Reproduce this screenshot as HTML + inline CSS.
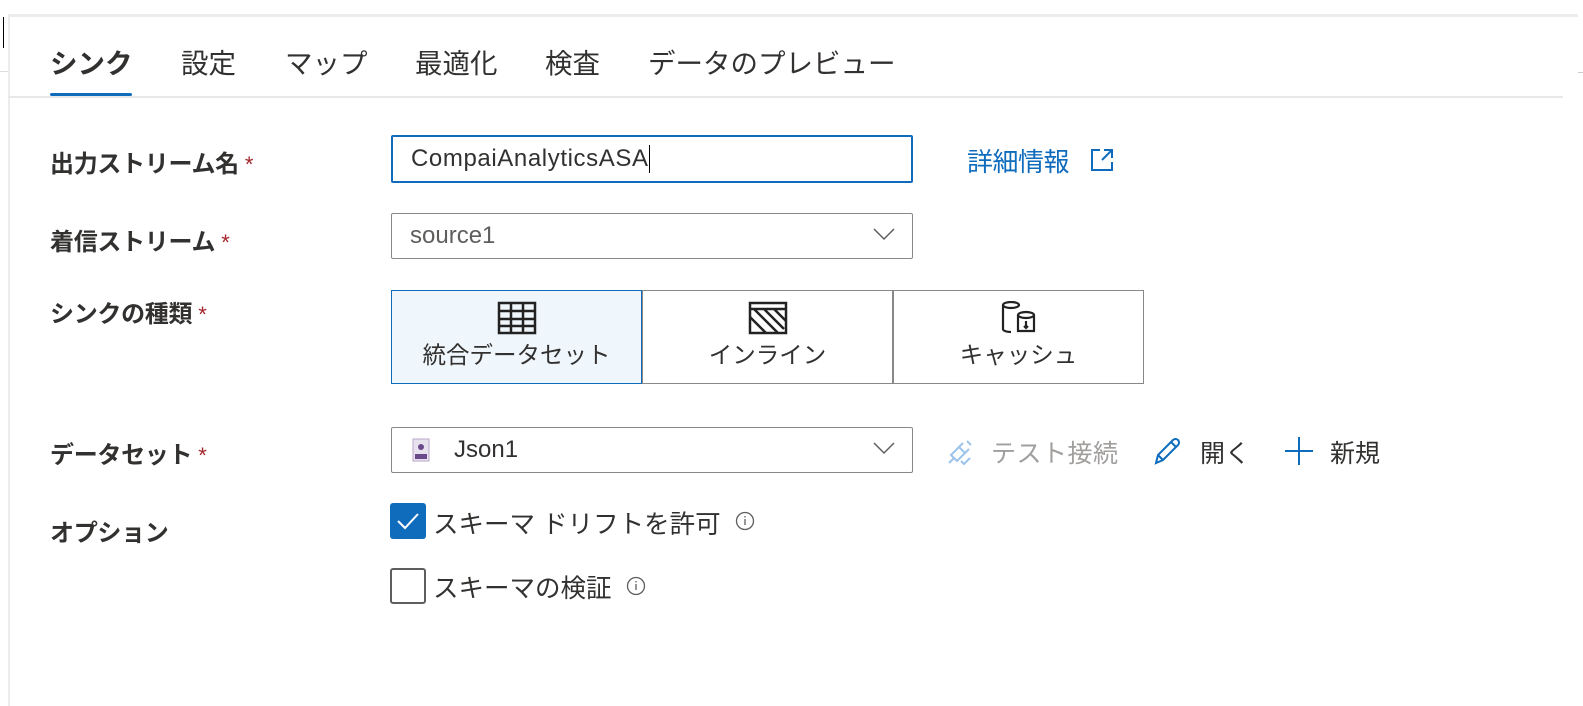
<!DOCTYPE html><html><head><meta charset="utf-8"><style>
body{margin:0;width:1583px;height:706px;background:#fff;position:relative;overflow:hidden;font-family:"Liberation Sans","Noto Sans CJK JP",sans-serif;color:#323130}
.a{position:absolute}
.tab{position:absolute;top:41px;font-size:27.5px;color:#323130;white-space:nowrap}
.lbl{position:absolute;left:50px;font-size:24px;font-weight:bold;color:#323130;white-space:nowrap;letter-spacing:-0.3px}
.lbl span{color:#a4262c;font-weight:normal;margin-left:6px;font-size:22px}
.box{position:absolute;border:1px solid #8a8886;border-radius:2px;box-sizing:border-box;font-size:24px;display:flex;align-items:center}
.tile{position:absolute;top:290px;height:94px;border:1.5px solid #8a8886;box-sizing:border-box;text-align:center;font-size:23.5px}
.tile svg{display:block;margin:10px auto 1px}
</style></head><body>
<div class="a" style="left:3px;top:17px;width:1px;height:31px;background:#000"></div>
<div class="a" style="left:8px;top:14px;width:1570px;height:3px;background:#ececec"></div>
<div class="a" style="left:8px;top:14px;width:2px;height:692px;background:#ececec"></div>
<div class="a" style="left:0;top:71px;width:8px;height:1px;background:#ddd"></div>
<div class="a" style="left:1578px;top:72px;width:5px;height:1px;background:#ccc"></div>
<div class="tab" style="left:50px;font-weight:bold">シンク</div>
<div class="tab" style="left:181px">設定</div>
<div class="tab" style="left:285px">マップ</div>
<div class="tab" style="left:415px">最適化</div>
<div class="tab" style="left:545px">検査</div>
<div class="tab" style="left:648px">データのプレビュー</div>
<div class="a" style="left:50px;top:93px;width:82px;height:3px;background:#0f6cbd;border-radius:2px"></div>
<div class="a" style="left:8px;top:96px;width:1555px;height:2px;background:#e8e8e8"></div>

<div class="lbl" style="top:144px">出力ストリーム名<span>*</span></div>
<div class="box" style="left:391px;top:135px;width:522px;height:48px;border:2px solid #0f6cbd;padding-left:18px;color:#323130;letter-spacing:0.6px">CompaiAnalyticsASA<span style="display:inline-block;width:1px;height:28px;background:#000"></span></div>
<div class="a" style="left:967px;top:142px;font-size:26px;color:#0f6cbd;letter-spacing:-0.5px">詳細情報</div>
<svg class="a" style="left:1090px;top:148px" width="24" height="24" viewBox="0 0 24 24" fill="none" stroke="#0f6cbd" stroke-width="2"><path d="M10 2H2v20h20v-8M14 2h8v8M22 2L12 12"/></svg>

<div class="lbl" style="top:222px">着信ストリーム<span>*</span></div>
<div class="box" style="left:391px;top:213px;width:522px;height:46px;padding-left:18px;color:#605e5c">source1</div>
<svg class="a" style="left:873px;top:227px" width="22" height="14" viewBox="0 0 22 14" fill="none" stroke="#605e5c" stroke-width="1.5"><path d="M1 2l10 10 10-10"/></svg>

<div class="lbl" style="top:294px">シンクの種類<span>*</span></div>
<div class="tile" style="left:391px;width:251px;background:#eff6fc;border-color:#0f6cbd">
<svg width="40" height="34" viewBox="0 0 40 34" fill="none" stroke="#222" stroke-width="2.5"><rect x="2" y="2" width="36" height="30"/><path d="M2 10h36M2 18h36M2 25h36M14 2v30M26 2v30"/></svg>統合データセット</div>
<div class="tile" style="left:642px;width:251px">
<svg width="40" height="34" viewBox="0 0 40 34" fill="none" stroke="#222" stroke-width="2.5"><rect x="2" y="2" width="36" height="30"/><path d="M2 8h36M6 8l24 24M16 8l20 20M26 8l12 12M2 16l16 16"/></svg>インライン</div>
<div class="tile" style="left:893px;width:251px">
<svg width="40" height="34" viewBox="0 0 40 34" fill="none" stroke="#222" stroke-width="2.2"><path d="M20 4a8 3 0 1 0-16 0v24c0 2 4 3 8 3M4 4a8 3 0 0 0 16 0"/><ellipse cx="27" cy="14" rx="8" ry="3"/><path d="M19 14v16h16V14M27 20v7M25 25l2 2 2-2"/></svg>キャッシュ</div>

<div class="lbl" style="top:435px">データセット<span>*</span></div>
<div class="box" style="left:391px;top:427px;width:522px;height:46px;padding-left:62px;color:#323130">Json1</div>
<svg class="a" style="left:412px;top:438px" width="18" height="24" viewBox="0 0 18 24"><rect x="1" y="1" width="16" height="22" fill="#e8e2ee" stroke="#b8a8c8"/><circle cx="9" cy="9" r="3" fill="#6b4a8c"/><rect x="3" y="16" width="12" height="5" fill="#6b4a8c"/></svg>
<svg class="a" style="left:873px;top:441px" width="22" height="14" viewBox="0 0 22 14" fill="none" stroke="#605e5c" stroke-width="1.5"><path d="M1 2l10 10 10-10"/></svg>
<svg class="a" style="left:945px;top:437px" width="30" height="30" viewBox="0 0 30 30" fill="none" stroke="#9cc3ea" stroke-width="2"><path d="M4 26l5-5M9 21l-3-3 8-8 6 6-8 8zM14 10l4-4M20 16l4-4M22 4l4 4"/><path d="M16 24l3 3 6-6"/></svg>
<div class="a" style="left:991px;top:434px;font-size:25px;color:#a19f9d;letter-spacing:0.5px">テスト接続</div>
<svg class="a" style="left:1152px;top:435px" width="30" height="32" viewBox="0 0 30 32" fill="none" stroke="#0f6cbd" stroke-width="2"><path d="M4 28l2-8L21 5a3 3 0 0 1 5 5L11 25zM6 20l5 5M19 7l5 5"/></svg>
<div class="a" style="left:1200px;top:434px;font-size:25px;color:#323130">開く</div>
<svg class="a" style="left:1284px;top:436px" width="30" height="30" viewBox="0 0 30 30" stroke="#0f6cbd" stroke-width="2"><path d="M15 1v28M1 15h28"/></svg>
<div class="a" style="left:1330px;top:434px;font-size:25px;color:#323130">新規</div>

<div class="lbl" style="top:513px">オプション</div>
<div class="a" style="left:390px;top:503px;width:36px;height:36px;background:#0f6cbd;border-radius:3px"></div>
<svg class="a" style="left:390px;top:503px" width="36" height="36" viewBox="0 0 36 36" fill="none" stroke="#fff" stroke-width="2"><path d="M8 18l7 7 13-14"/></svg>
<div class="a" style="left:433px;top:504px;font-size:25.5px">スキーマ ドリフトを許可</div>
<svg class="a" style="left:735px;top:511px" width="20" height="20" viewBox="0 0 20 20" fill="none" stroke="#605e5c" stroke-width="1.3"><circle cx="10" cy="10" r="8.5"/><path d="M10 8v6M10 5v1.5"/></svg>
<div class="a" style="left:390px;top:568px;width:36px;height:36px;border:2px solid #605e5c;box-sizing:border-box;border-radius:3px"></div>
<div class="a" style="left:433px;top:568px;font-size:25.5px">スキーマの検証</div>
<svg class="a" style="left:626px;top:576px" width="20" height="20" viewBox="0 0 20 20" fill="none" stroke="#605e5c" stroke-width="1.3"><circle cx="10" cy="10" r="8.5"/><path d="M10 8v6M10 5v1.5"/></svg>
</body></html>
